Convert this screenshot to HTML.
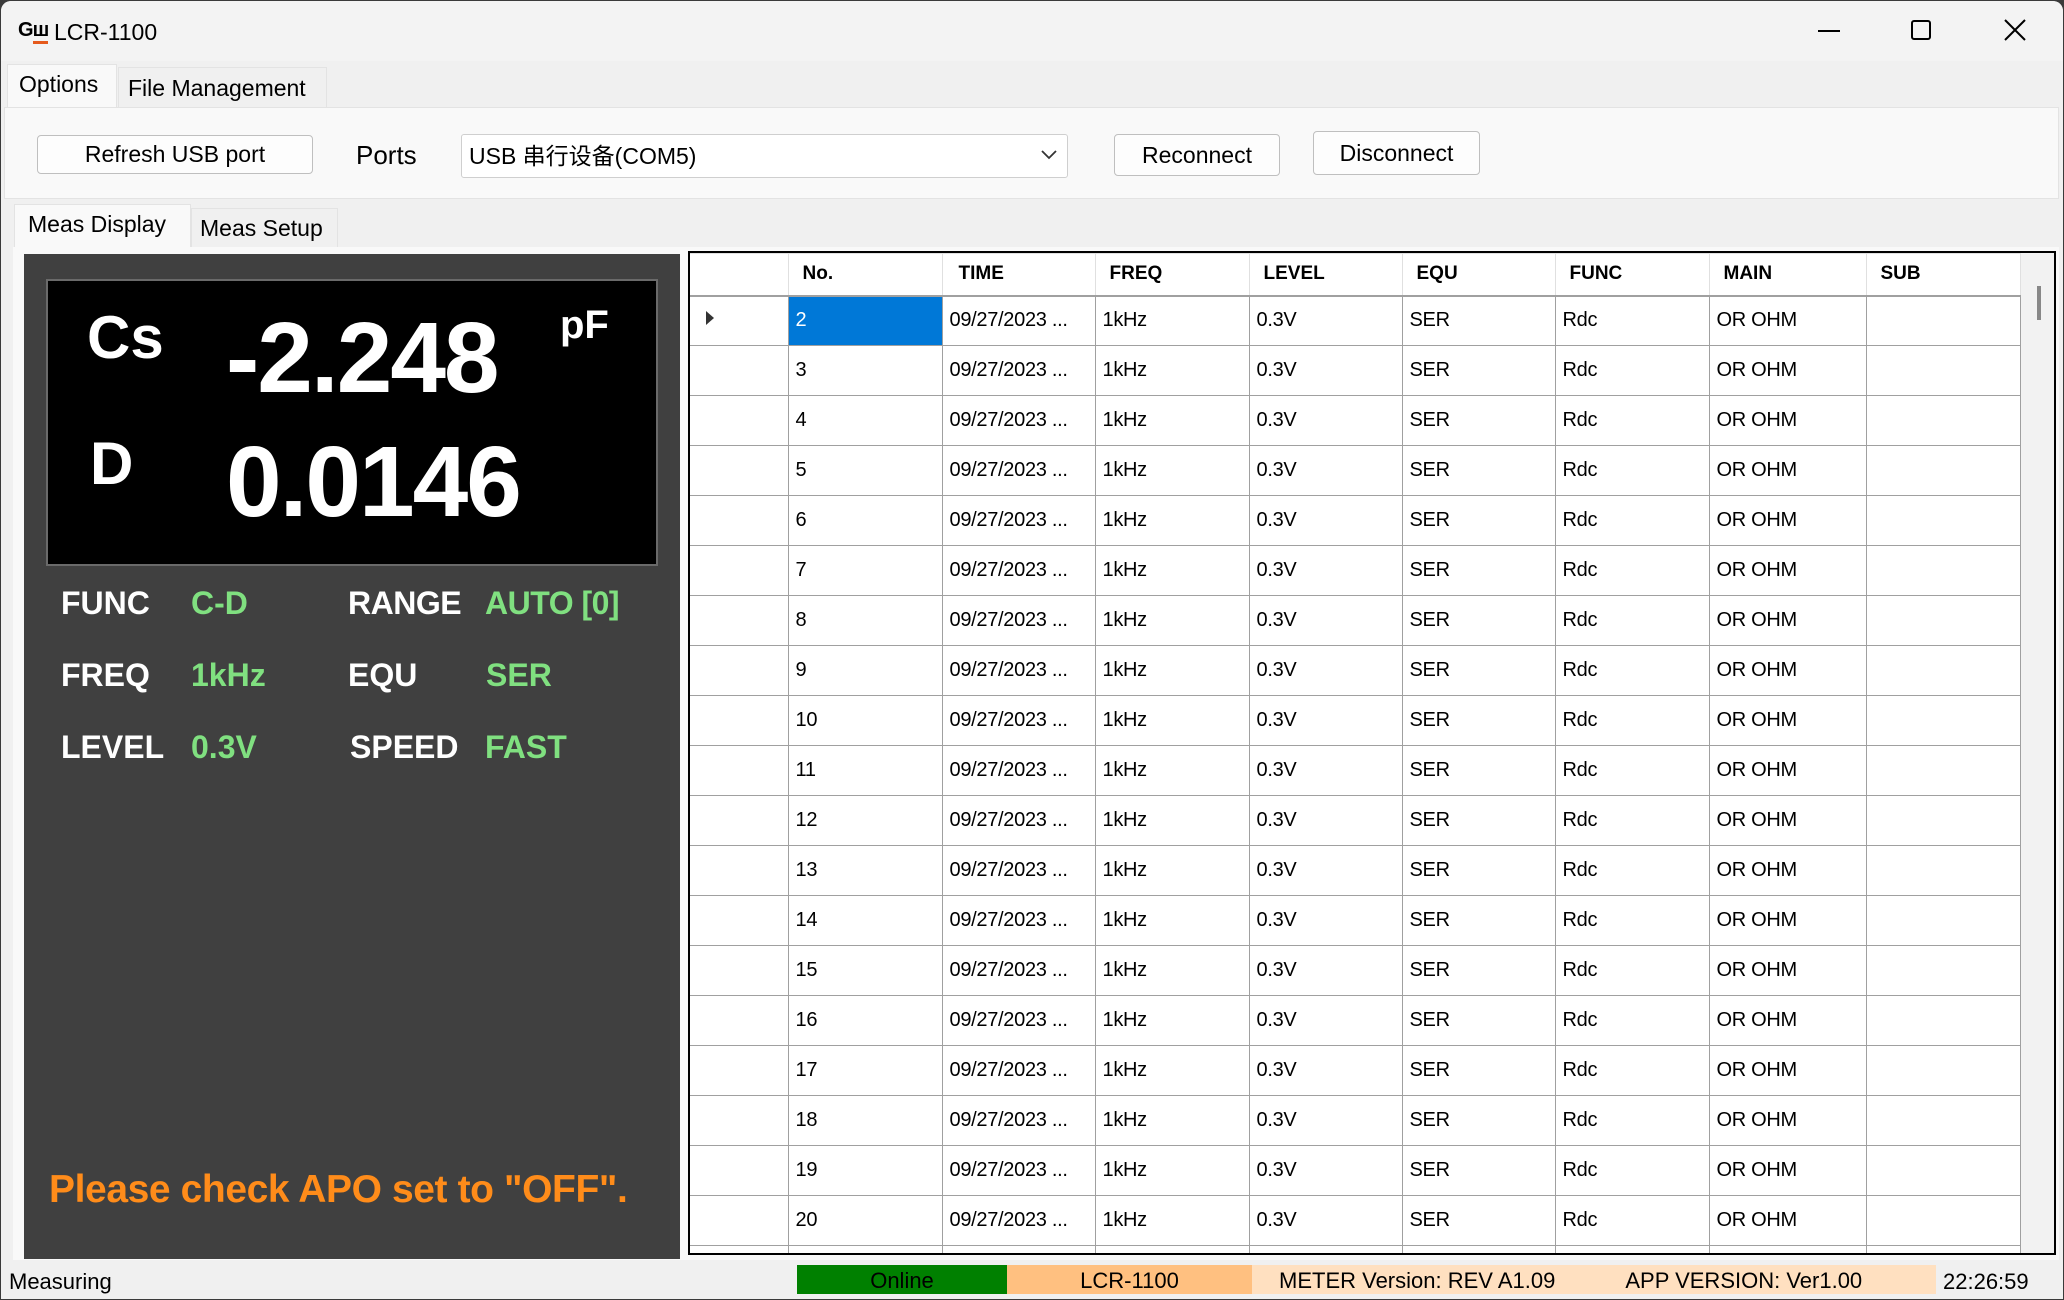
<!DOCTYPE html>
<html><head><meta charset="utf-8"><style>
*{margin:0;padding:0;box-sizing:border-box}
body{width:2064px;height:1300px;background:#3a3a3a;font-family:"Liberation Sans","Noto Sans CJK SC",sans-serif;color:#000;position:relative;overflow:hidden}
.a{position:absolute}
#win{left:1px;top:1px;width:2062px;height:1298px;background:#f0f0f0;border-radius:10px 10px 0 0;overflow:hidden}
.btn{background:#fdfdfd;border:1px solid #bfbfbf;border-radius:4px;font-size:23px;text-align:center}
.lbl{font-weight:bold;font-size:32px;color:#fff}
.val{font-weight:bold;font-size:32px;color:#80e080}
table{border-collapse:collapse;table-layout:fixed;font-size:20px}
td{border:1px solid #a0a0a0;height:50px;padding-left:7px;white-space:nowrap;overflow:hidden;letter-spacing:-0.3px}
th{border:1px solid #e0e0e0;border-bottom:2px solid #a0a0a0;height:42px;text-align:left;padding-left:14px;font-size:19px}
td.rh{border-left:none}
</style></head><body>
<div id="win" class="a">
 <div class="a" style="left:0;top:0;width:2062px;height:60px;background:#f3f3f3"></div>
 <div class="a" style="left:17px;top:18px;font-weight:bold;font-size:20px;letter-spacing:-1px">G<span style="border-bottom:3px solid #e55a1c">ш</span></div>
 <div class="a" style="left:53px;top:18px;font-size:23px">LCR-1100</div>
 <div class="a" style="left:1817px;top:29px;width:22px;height:2px;background:#000"></div>
 <div class="a" style="left:1910px;top:19px;width:20px;height:20px;border:2px solid #000;border-radius:3px"></div>
 <svg class="a" style="left:2003px;top:18px" width="22" height="22"><path d="M1 1L21 21M21 1L1 21" stroke="#000" stroke-width="2"/></svg>

 <div class="a" style="left:6px;top:63px;width:110px;height:44px;background:#f9f9f9;border:1px solid #e3e3e3;border-bottom:none"></div>
 <div class="a" style="left:18px;top:70px;font-size:23px">Options</div>
 <div class="a" style="left:117px;top:66px;width:209px;height:40px;border:1px solid #e3e3e3;border-bottom:none"></div>
 <div class="a" style="left:127px;top:74px;font-size:23px">File Management</div>
 <div class="a" style="left:3px;top:106px;width:2055px;height:92px;background:#f9f9f9;border:1px solid #e3e3e3"></div>
 <div class="a btn" style="left:36px;top:134px;width:276px;height:39px;line-height:37px">Refresh USB port</div>
 <div class="a" style="left:355px;top:139px;font-size:26px">Ports</div>
 <div class="a" style="left:460px;top:133px;width:607px;height:44px;background:#fff;border:1px solid #cfcfcf;border-radius:3px;font-size:23px;line-height:42px;padding-left:7px">USB 串行设备(COM5)</div>
 <svg class="a" style="left:1040px;top:148px" width="16" height="12"><path d="M1 2L8 9L15 2" stroke="#333" stroke-width="1.8" fill="none"/></svg>
 <div class="a btn" style="left:1113px;top:133px;width:166px;height:42px;line-height:40px">Reconnect</div>
 <div class="a btn" style="left:1312px;top:130px;width:167px;height:44px;line-height:42px">Disconnect</div>

 <div class="a" style="left:13px;top:203px;width:177px;height:45px;background:#f9f9f9;border:1px solid #e3e3e3;border-bottom:none"></div>
 <div class="a" style="left:27px;top:210px;font-size:23px">Meas Display</div>
 <div class="a" style="left:190px;top:207px;width:147px;height:40px;border:1px solid #e3e3e3;border-bottom:none"></div>
 <div class="a" style="left:199px;top:214px;font-size:23px">Meas Setup</div>
 <div class="a" style="left:12px;top:246px;width:2046px;height:1013px;background:#f9f9f9"></div>

 <div class="a" style="left:23px;top:253px;width:656px;height:1005px;background:#404040"></div>
 <div class="a" style="left:45px;top:278px;width:612px;height:287px;background:#000;border:2px solid #6a6a6a"></div>
 <div class="a" style="left:86px;top:302px;font-weight:bold;font-size:60px;color:#fff">Cs</div>
 <div class="a" style="left:225px;top:300px;font-weight:bold;font-size:100px;color:#fff;letter-spacing:-2px">-2.248</div>
 <div class="a" style="left:559px;top:302px;font-weight:bold;font-size:40px;color:#fff">pF</div>
 <div class="a" style="left:89px;top:428px;font-weight:bold;font-size:60px;color:#fff">D</div>
 <div class="a" style="left:225px;top:424px;font-weight:bold;font-size:100px;color:#fff;letter-spacing:-2px">0.0146</div>
 <div class="a lbl" style="left:60px;top:584px">FUNC</div><div class="a val" style="left:190px;top:584px">C-D</div>
 <div class="a lbl" style="left:347px;top:584px;letter-spacing:-0.5px">RANGE</div><div class="a val" style="left:484px;top:584px;letter-spacing:-0.5px">AUTO [0]</div>
 <div class="a lbl" style="left:60px;top:656px">FREQ</div><div class="a val" style="left:190px;top:656px">1kHz</div>
 <div class="a lbl" style="left:347px;top:656px">EQU</div><div class="a val" style="left:485px;top:656px">SER</div>
 <div class="a lbl" style="left:60px;top:728px">LEVEL</div><div class="a val" style="left:190px;top:728px">0.3V</div>
 <div class="a lbl" style="left:349px;top:728px">SPEED</div><div class="a val" style="left:484px;top:728px">FAST</div>
 <div class="a" style="left:48px;top:1167px;font-weight:bold;font-size:39px;color:#ff8c1a;letter-spacing:-0.4px">Please check APO set to "OFF".</div>

 <div class="a" style="left:687px;top:250px;width:1368px;height:1004px;background:#fff;border:2px solid #000;overflow:hidden">
  <div class="a" style="left:1330px;top:0;width:36px;height:1002px;background:#f2f2f2"></div>
  <div class="a" style="left:1347px;top:33px;width:4px;height:34px;background:#888"></div>
  <table class="a" style="left:0;top:0;width:1330px">
   <colgroup><col style="width:98px"><col style="width:154px"><col style="width:153px"><col style="width:154px"><col style="width:153px"><col style="width:153px"><col style="width:154px"><col style="width:157px"><col style="width:154px"></colgroup>
   <tr><th style="border-left:none"></th><th>No.</th><th style="padding-left:16px">TIME</th><th>FREQ</th><th>LEVEL</th><th>EQU</th><th>FUNC</th><th>MAIN</th><th>SUB</th></tr>
   <tbody id="tb"></tbody>
  </table>
 </div>

 <div class="a" style="left:8px;top:1268px;font-size:22px">Measuring</div>
 <div class="a" style="left:796px;top:1264px;width:210px;height:29px;background:#008000;font-size:22px;text-align:center;line-height:32px">Online</div>
 <div class="a" style="left:1006px;top:1264px;width:245px;height:29px;background:#ffc080;font-size:22px;text-align:center;line-height:32px">LCR-1100</div>
 <div class="a" style="left:1251px;top:1264px;width:684px;height:29px;background:#ffe0c0;font-size:22px;line-height:32px"><span style="margin-left:27px">METER Version: REV A1.09</span><span style="margin-left:70px">APP VERSION: Ver1.00</span></div>
 <div class="a" style="left:1942px;top:1268px;font-size:22px">22:26:59</div>
</div>
<script>
var h='';for(var i=2;i<=21;i++){h+='<tr><td class="rh">'+(i==2?'<svg width="12" height="16" style="margin-left:7px"><path d="M2 1L10 8L2 15Z" fill="#333"/></svg>':'')+'</td><td'+(i==2?' style="background:#0078d7;color:#fff"':'')+'>'+i+'</td><td>09/27/2023 ...</td><td>1kHz</td><td>0.3V</td><td>SER</td><td>Rdc</td><td>OR OHM</td><td></td></tr>';}
document.getElementById('tb').innerHTML=h;
</script>
</body></html>
